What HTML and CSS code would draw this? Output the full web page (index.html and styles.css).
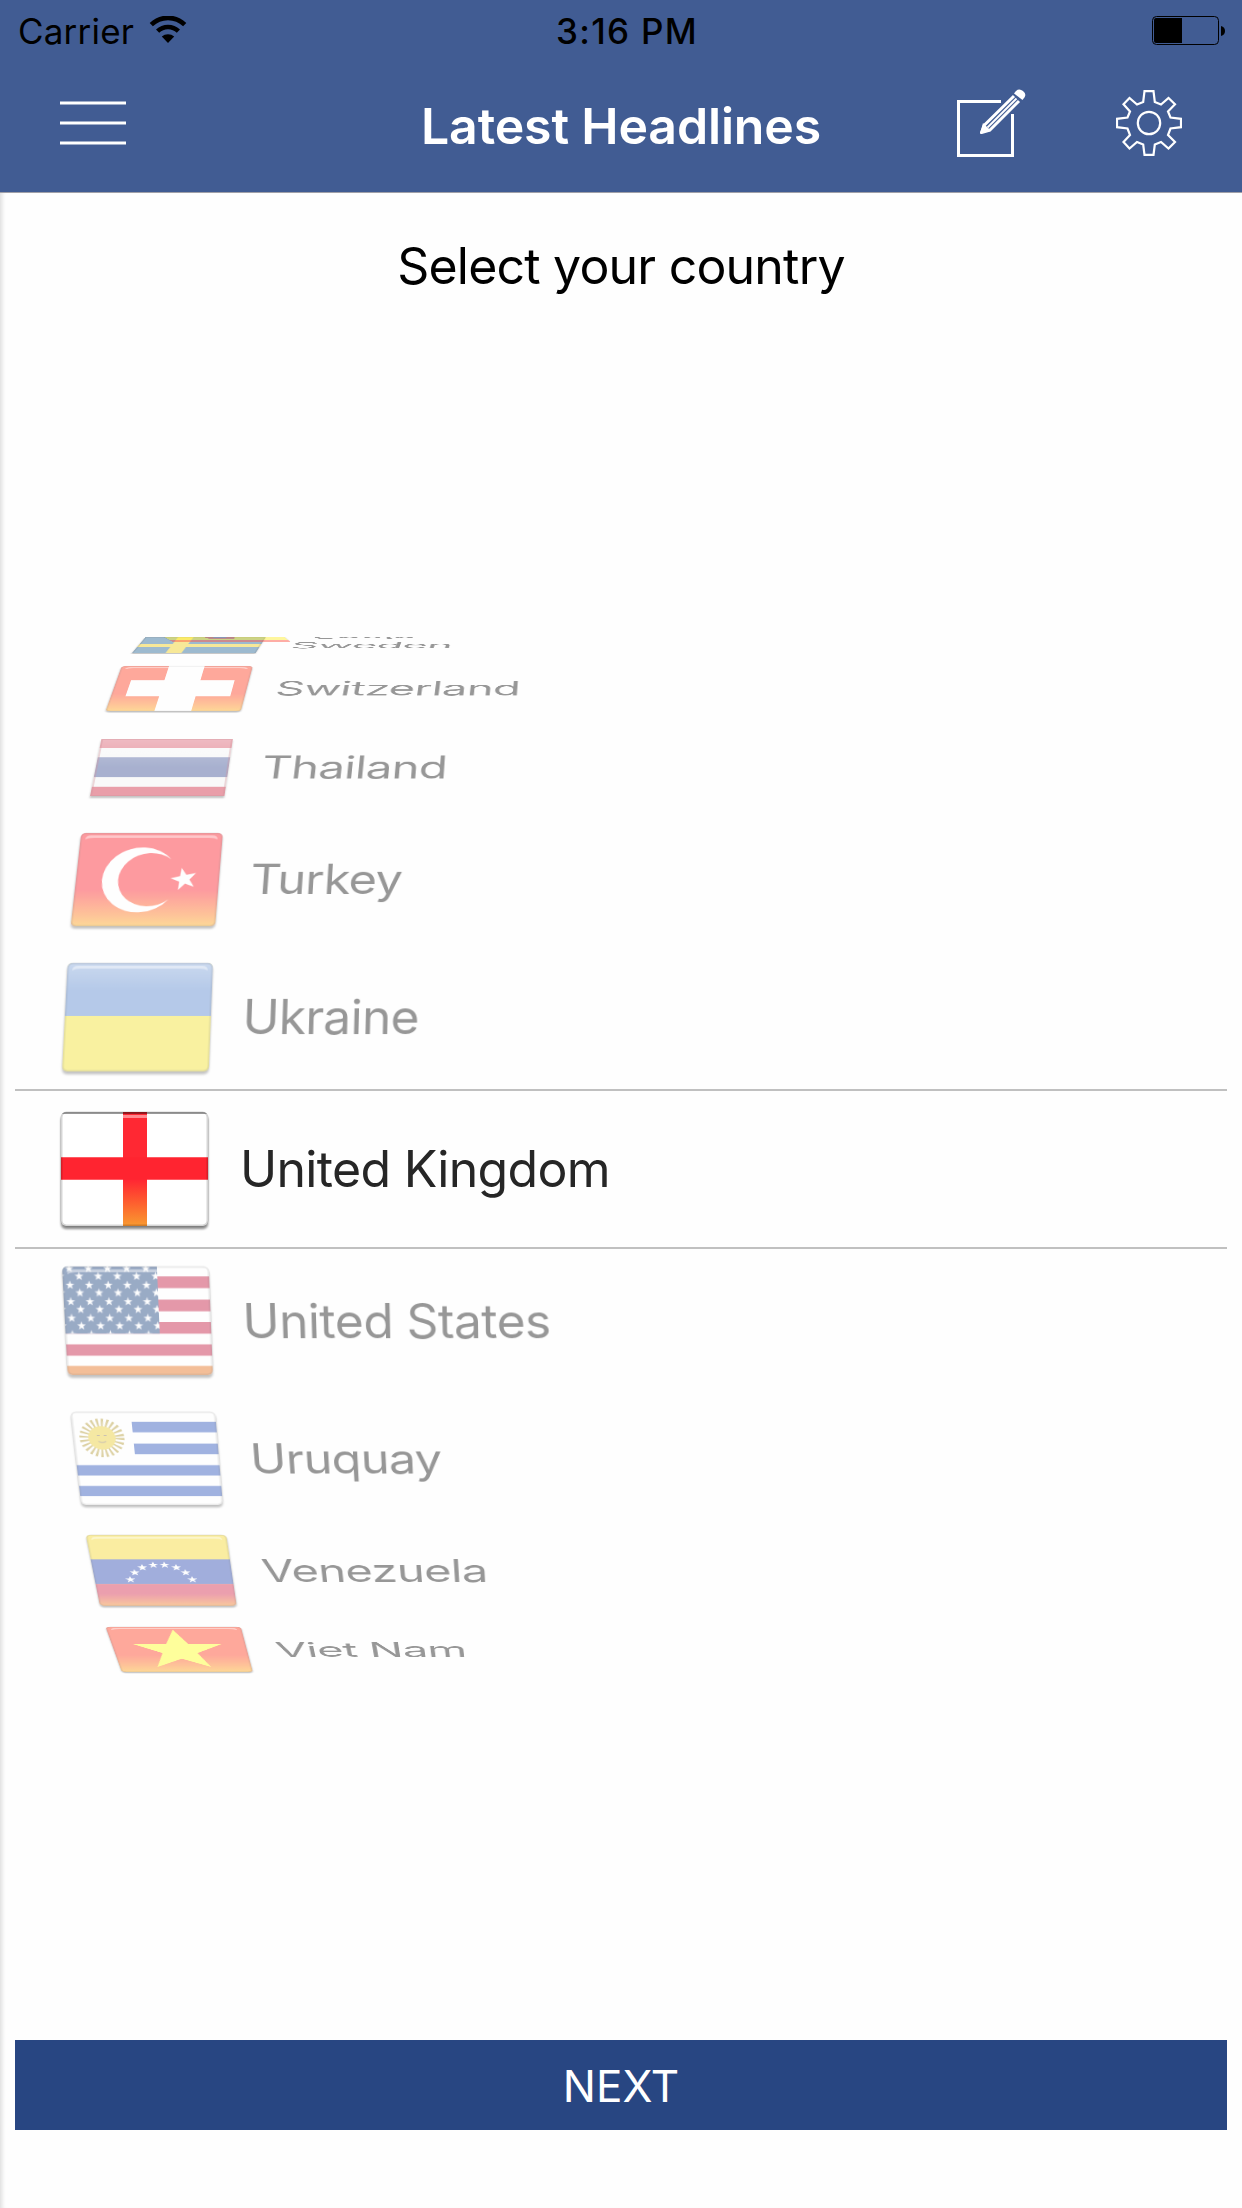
FILE: index.html
```html
<!DOCTYPE html>
<html lang="en">
<head>
<meta charset="utf-8">
<title>Latest Headlines</title>
<link rel="stylesheet" href="styles.css">
</head>
<body>
<svg class="defs" width="0" height="0" aria-hidden="true">
  <defs>
    <linearGradient id="warm" x1="0" y1="0" x2="0" y2="1">
      <stop offset="0.6" stop-color="#ff9c24" stop-opacity="0"/>
      <stop offset="0.97" stop-color="#fdae26" stop-opacity="1"/>
    </linearGradient>
    <linearGradient id="ember" x1="0" y1="0" x2="0" y2="1">
      <stop offset="0.6" stop-color="#ff9c24" stop-opacity="0"/>
      <stop offset="0.97" stop-color="#f8a030" stop-opacity="0.9"/>
    </linearGradient>
    <linearGradient id="shine" x1="0" y1="0" x2="0" y2="1">
      <stop offset="0" stop-color="#fff" stop-opacity="0.3"/>
      <stop offset="1" stop-color="#fff" stop-opacity="0"/>
    </linearGradient>
    <clipPath id="round"><rect x="1" y="1" width="147" height="112" rx="5"/></clipPath>
    <path id="star" d="M0-10 2.35-3.24 9.51-3.09 3.8 1.24 5.88 8.09 0 4 -5.88 8.09 -3.8 1.24 -9.51-3.09 -2.35-3.24Z"/>
    <g id="gloss">
      <path d="M6 9Q6 4 12 4H137Q143 4 143 9Q140 7 134 7H15Q9 7 6 9Z" fill="#fff" opacity=".45"/>
      <rect x="1.5" y="1.5" width="146" height="111" rx="5" fill="none" stroke="#000" stroke-opacity=".16" stroke-width="2"/>
    </g>
    <pattern id="stars" width="19.2" height="17" patternUnits="userSpaceOnUse" x="-2" y="-5">
      <use href="#star" transform="translate(10 8) scale(.46)" fill="#fff"/>
      <use href="#star" transform="translate(0.4 16) scale(.46)" fill="#fff"/>
      <use href="#star" transform="translate(19.6 16) scale(.46)" fill="#fff"/>
      <use href="#star" transform="translate(0.4 -1) scale(.46)" fill="#fff"/>
      <use href="#star" transform="translate(19.6 -1) scale(.46)" fill="#fff"/>
    </pattern>
  </defs>
</svg>

<header class="header">
  <div class="status">
    <div class="status-left">
      <span class="carrier">Carrier</span>
      <svg class="wifi" viewBox="0 0 38 28" width="38" height="28">
        <path d="M2.3 8.6A24 24 0 0 1 35.7 8.6M8.6 15.2A15 15 0 0 1 29.4 15.2" fill="none" stroke="#000" stroke-width="4.6"/>
        <path d="M19 27 12.8 20.6A9.6 9.6 0 0 1 25.2 20.6Z"/>
      </svg>
    </div>
    <span class="clock">3:16 PM</span>
    <div class="status-right">
      <svg class="battery" viewBox="0 0 74 30" width="74" height="30">
        <rect x=".5" y=".5" width="66" height="28" rx="4" fill="none" stroke="#000"/>
        <path d="M4 2H30V27H4Q2 27 2 25V4Q2 2 4 2Z"/>
        <path d="M69 10Q73 11 73 15T69 20Z"/>
      </svg>
    </div>
  </div>
  <nav class="nav">
    <svg class="menu" viewBox="0 0 66 44" width="66" height="44">
      <path d="M0 2H66M0 22H66M0 42H66" stroke="#fff" stroke-width="3"/>
    </svg>
    <h1 class="title">Latest Headlines</h1>
    <div class="actions">
      <svg viewBox="0 0 70 70" width="70" height="70" fill="none" stroke="#fff">
        <path d="M45 13.5H2.5V67.5H56.5V26" stroke-width="3"/>
        <path d="M58 8 28.5 37 25.5 44.5 34 42 63 13" stroke-width="3" stroke-linejoin="round"/>
        <path d="M60.5 10.5 31.5 39.5" stroke-width="2"/>
        <path d="M24 45.5 27 35 35 43Z" fill="#fff" stroke="none"/>
        <path d="M58 5.500Q62-1 67 3T66.500 12Z" fill="#fff" stroke="none"/>
      </svg>
      <svg viewBox="0 0 66 66" width="66" height="66" fill="none" stroke="#fff" stroke-width="2.2">
        <circle cx="33" cy="33" r="11.2"/>
        <path d="M28.5 1.2H37.5L38.8 12 45 14.5 52.5 8 59 14.2 52 21.5 54.5 27.5 65 28.8V37.2L54.5 38.5 52 45 59 52 52.5 58.5 45 52 38.8 54.5 37.5 64.8H28.5L27.2 54.5 21 52 13.5 58.5 7.5 52 14 45 11.5 38.5 1 37.2V28.8L11.5 27.5 14 21.5 7.5 14.2 13.5 8 21 14.5 27.2 12Z"/>
      </svg>
    </div>
  </nav>
</header>

<main class="content">
  <h2 class="prompt">Select your country</h2>
  <div class="picker">
    <ul class="wheel">
      <li class="row up6">
        <svg class="flag" viewBox="0 0 149 116" preserveAspectRatio="none">
          <g clip-path="url(#round)"><rect width="149" height="116" fill="#f54"/><rect y="22" width="149" height="74" fill="#fe3"/><rect x="50" y="38" width="36" height="40" rx="8" fill="#d54"/><rect x="60" y="46" width="16" height="22" fill="#77a"/></g>
        </svg>
        <span class="name">Spain</span>
      </li>
      <li class="row up5">
        <svg class="flag flat" viewBox="0 0 140 92" preserveAspectRatio="none">
          <rect width="140" height="92" fill="#34709c"/><path d="M47 0V92M0 46H140" stroke="#f0d028" stroke-width="18"/><rect x="1" y="1" width="138" height="90" fill="none" stroke="#000" stroke-opacity=".2" stroke-width="2"/>
        </svg>
        <span class="name">Sweden</span>
      </li>
      <li class="row up4">
        <svg class="flag" viewBox="0 0 149 116" preserveAspectRatio="none">
          <g clip-path="url(#round)"><rect width="149" height="116" fill="#ff4a30"/><rect width="149" height="116" fill="url(#warm)"/><path d="M74 0V113M17 57H132" stroke="#fff" stroke-width="40"/></g><use href="#gloss"/>
        </svg>
        <span class="name">Switzerland</span>
      </li>
      <li class="row up3">
        <svg class="flag flat" viewBox="0 0 140 92" preserveAspectRatio="none">
          <rect width="140" height="92" fill="#f4f4f4"/><path d="M0 7.5H140M0 84.5H140" stroke="#d2364c" stroke-width="15"/><rect y="30" width="140" height="32" fill="#4a5c9c"/><rect width="140" height="46" fill="url(#shine)"/><rect x="1" y="1" width="138" height="90" fill="none" stroke="#a02030" stroke-opacity=".35" stroke-width="2"/>
        </svg>
        <span class="name">Thailand</span>
      </li>
      <li class="row up2">
        <svg class="flag" viewBox="0 0 149 116" preserveAspectRatio="none">
          <g clip-path="url(#round)"><rect width="149" height="116" fill="#fd2e38"/><rect width="149" height="116" fill="url(#warm)"/><path d="M97 33A39 39 0 1 0 98 81A32 32 0 1 1 97 33Z" fill="#fff"/><use href="#star" transform="translate(112 57) rotate(-14) scale(1.4)" fill="#fff"/></g><use href="#gloss"/>
        </svg>
        <span class="name">Turkey</span>
      </li>
      <li class="row up1">
        <svg class="flag" viewBox="0 0 149 116" preserveAspectRatio="none">
          <g clip-path="url(#round)"><rect width="149" height="116" fill="#f4e43a"/><rect width="149" height="56" fill="#6590d2"/><rect width="149" height="30" fill="url(#shine)"/></g><use href="#gloss"/>
        </svg>
        <span class="name">Ukraine</span>
      </li>
      <li class="row selected">
        <svg class="flag" viewBox="0 0 149 116" preserveAspectRatio="none">
          <g clip-path="url(#round)"><rect width="149" height="116" fill="#fff"/><path d="M75 0V116" stroke="#ff2833" stroke-width="24"/><rect x="63" width="24" height="114" fill="url(#ember)"/><path d="M0 56.5H149" stroke="#ff2430" stroke-width="22"/><path d="M2 1.5H147" stroke="#000" stroke-opacity=".35" stroke-width="3"/></g><use href="#gloss"/>
        </svg>
        <span class="name">United Kingdom</span>
      </li>
      <li class="row down1">
        <svg class="flag" viewBox="0 0 149 116" preserveAspectRatio="none">
          <g clip-path="url(#round)"><rect width="149" height="116" fill="#fff"/><path d="M0 17H149M0 41H149M0 64H149M0 87H149" stroke="#c8284c" stroke-width="12"/><path d="M0 109H149" stroke="#e87828" stroke-width="11"/><rect width="96" height="70" fill="#2c5088"/><rect width="96" height="70" fill="url(#stars)"/></g><use href="#gloss"/>
        </svg>
        <span class="name">United States</span>
      </li>
      <li class="row down2">
        <svg class="flag" viewBox="0 0 149 116" preserveAspectRatio="none">
          <g clip-path="url(#round)"><rect width="149" height="116" fill="#fff"/><path d="M62 19H149M62 45H149M0 71H149M0 96H149" stroke="#3a60c0" stroke-width="12.5"/><circle cx="30" cy="32" r="17" fill="none" stroke="#b8a040" stroke-width="12" stroke-dasharray="2 2.45"/><circle cx="30" cy="32" r="14" fill="#ecd040"/><path d="M25 29h3M32 29h3M26 36q4 3 8 0" stroke="#876" fill="none"/></g><use href="#gloss"/>
        </svg>
        <span class="name">Uruquay</span>
      </li>
      <li class="row down3">
        <svg class="flag" viewBox="0 0 149 116" preserveAspectRatio="none">
          <g clip-path="url(#round)"><rect width="149" height="116" fill="#f6dc3c"/><rect y="39" width="149" height="39" fill="#3c58b8"/><rect y="78" width="149" height="38" fill="#d83858"/><rect y="60" width="149" height="56" fill="url(#warm)" opacity=".8"/>
          <g fill="#fff"><use href="#star" transform="translate(39 71) scale(.55)"/><use href="#star" transform="translate(45 60) scale(.55)"/><use href="#star" transform="translate(54 52) scale(.55)"/><use href="#star" transform="translate(66 48) scale(.55)"/><use href="#star" transform="translate(78 48) scale(.55)"/><use href="#star" transform="translate(90 52) scale(.55)"/><use href="#star" transform="translate(99 60) scale(.55)"/><use href="#star" transform="translate(105 71) scale(.55)"/></g></g><use href="#gloss"/>
        </svg>
        <span class="name">Venezuela</span>
      </li>
      <li class="row down4">
        <svg class="flag" viewBox="0 0 149 116" preserveAspectRatio="none">
          <g clip-path="url(#round)"><rect width="149" height="116" fill="#ff4a30"/><rect width="149" height="116" fill="url(#warm)"/><use href="#star" transform="translate(73 59) scale(5.1)" fill="#ffff30"/></g><use href="#gloss"/>
        </svg>
        <span class="name">Viet Nam</span>
      </li>
    </ul>
  </div>
  <button class="next" type="button">NEXT</button>
</main>
</body>
</html>
```
FILE: styles.css
```css
* { box-sizing: border-box; }

body {
  margin: 0;
  width: 1242px;
  height: 2208px;
  display: flex;
  flex-direction: column;
  background: #fefefe;
  font-family: Inter, "Liberation Sans", sans-serif;
  color: #000;
  overflow: hidden;
}

.defs { display: block; flex: none; }

.header {
  height: 193px;
  flex: none;
  background: #415c93;
  border-bottom: 1px solid #a0a0a8;
}

.status {
  height: 60px;
  display: grid;
  grid-template-columns: 1fr auto 1fr;
  align-items: center;
  padding: 2px 16px 0 18px;
  font-size: 35px;
  line-height: 58px;
}

.status-left { display: flex; align-items: center; gap: 15px; }
.status-left .wifi { margin-top: -2px; }
.status-right { display: flex; justify-content: flex-end; }
.carrier { letter-spacing: 0.2px; }
.clock { font-weight: 500; letter-spacing: 1.3px; padding-left: 10px; }

.nav {
  height: 132px;
  display: grid;
  grid-template-columns: 1fr auto 1fr;
  align-items: center;
  padding: 0 60px;
}

.menu { margin-top: -6px; }

.title {
  margin: 0;
  color: #fff;
  font-size: 50px;
  font-weight: 600;
  line-height: 60px;
  letter-spacing: -0.15px;
}

.actions {
  display: flex;
  justify-content: flex-end;
  align-items: center;
  gap: 90px;
  margin-top: -6px;
}

.content {
  flex: 1;
  display: flex;
  flex-direction: column;
  align-items: stretch;
  padding: 0 15px 78px;
  box-shadow: inset 5px 0 4px -3px #ddd;
}

.prompt {
  margin: 43px 0 0;
  font-size: 50px;
  font-weight: 400;
  line-height: 60px;
  letter-spacing: -0.8px;
  text-align: center;
}

.picker {
  height: 1066px;
  margin-top: 341px;
  overflow: hidden;
  display: grid;
  grid-template-rows: 452px 160px 454px;
}

.picker::before {
  content: "";
  grid-area: 2 / 1;
  border-top: 2px solid #c0c0c0;
  border-bottom: 2px solid #c0c0c0;
}

/* Every row shares one grid cell and is turned around the drum axis. */
.wheel {
  grid-area: 2 / 1;
  margin: 0;
  padding: 0;
  list-style: none;
  display: grid;
  perspective: 2600px;
  perspective-origin: 50% 50%;
}

.row {
  grid-area: 1 / 1;
  display: flex;
  align-items: center;
  gap: 31px;
  padding-left: 45px;
  color: #262626;
  opacity: 0.48;
  transform: translateZ(-656px) rotateX(var(--turn)) translateZ(656px);
}

.selected { --turn: 0deg; opacity: 1; }
.up1 { --turn: 13.5deg; }
.up2 { --turn: 27deg; }
.up3 { --turn: 40.5deg; }
.up4 { --turn: 54deg; }
.up5 { --turn: 67.2deg; }
.up6 { --turn: 84.3deg; z-index: 1; }
.down1 { --turn: -13.5deg; }
.down2 { --turn: -27deg; }
.down3 { --turn: -40.5deg; }
.down4 { --turn: -54deg; }

.flag {
  width: 149px;
  height: 118px;
  margin-top: 2px;
  filter: drop-shadow(0 3px 1px rgba(0, 0, 0, 0.45));
}

.flat { width: 141px; height: 92px; margin: 0 4px; }

.name {
  font-size: 50px;
  line-height: 60px;
  letter-spacing: -0.7px;
  white-space: nowrap;
}

.down1 .name { letter-spacing: -0.5px; }

.next {
  height: 90px;
  margin-top: auto;
  border: 0;
  background: #284682;
  color: #fff;
  font: 400 44px/90px Inter, "Liberation Sans", sans-serif;
}
```
